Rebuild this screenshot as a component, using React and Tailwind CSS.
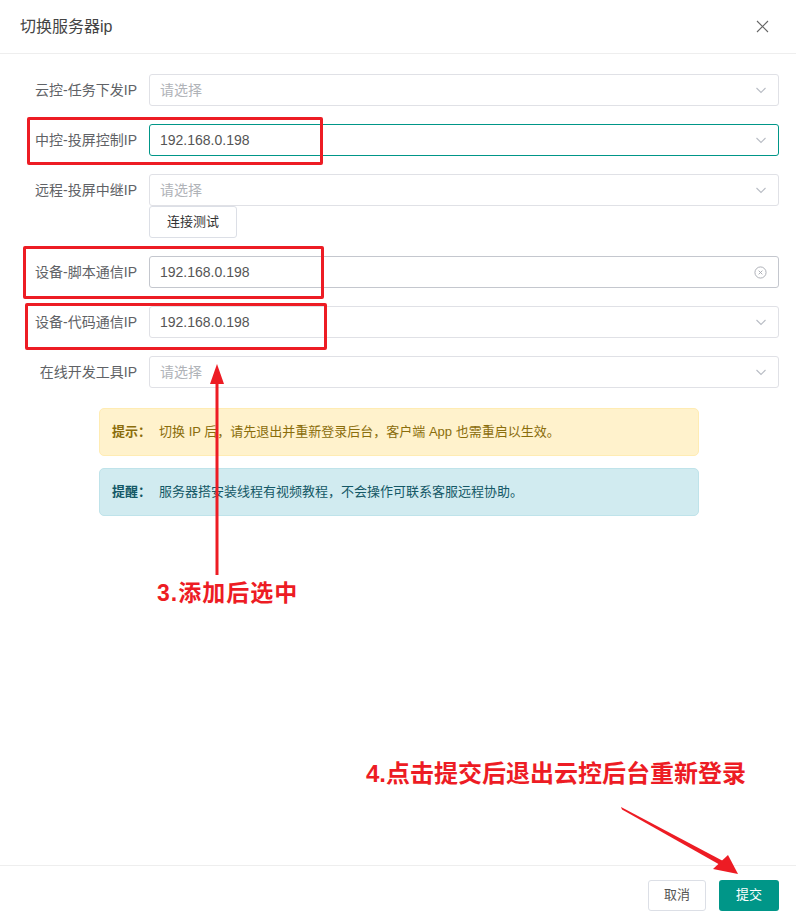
import React from 'react';

const fieldRows = [
  { label: '云控-任务下发IP', value: '', state: 'idle', icon: 'chevron' },
  { label: '中控-投屏控制IP', value: '192.168.0.198', state: 'focus', icon: 'chevron' },
  { label: '远程-投屏中继IP', value: '', state: 'idle', icon: 'chevron', extra: true },
  { label: '设备-脚本通信IP', value: '192.168.0.198', state: 'hover', icon: 'clear' },
  { label: '设备-代码通信IP', value: '192.168.0.198', state: 'idle', icon: 'chevron' },
  { label: '在线开发工具IP', value: '', state: 'idle', icon: 'chevron' },
];

const Chevron = () => (
  <svg width="12" height="12" viewBox="0 0 12 12" fill="none">
    <path d="M1.5 4l4.5 4.5L10.5 4" stroke="#b8bcc4" strokeWidth="1.1" />
  </svg>
);

const ClearIcon = () => (
  <svg width="13" height="13" viewBox="0 0 14 14" fill="none">
    <circle cx="7" cy="7" r="6" stroke="#a8abb2" strokeWidth="1" />
    <path d="M5 5l4 4M9 5l-4 4" stroke="#a8abb2" strokeWidth="1" />
  </svg>
);

const Field = ({ label, value, state, icon }) => {
  const border =
    state === 'focus' ? 'border-[#009688]' : state === 'hover' ? 'border-[#c4c7ce]' : 'border-[#e0e1e6]';
  return (
    <div className="flex items-center h-8">
      <div className="w-[149px] pr-3 text-right text-[14px] text-[#606266] shrink-0">{label}</div>
      <div className={`flex-1 h-8 border rounded-[3px] flex items-center justify-between pl-[10px] pr-[11px] ${border}`}>
        <span className={`text-[14px] ${value ? 'text-[#555]' : 'text-[#b0b3b8]'}`}>{value || '请选择'}</span>
        {icon === 'clear' ? <ClearIcon /> : <Chevron />}
      </div>
    </div>
  );
};

const App = () => {
  return (
    <div
      className="relative w-[796px] h-[924px] bg-white flex flex-col overflow-hidden"
      style={{ fontFamily: '"Liberation Sans", "Noto Sans CJK SC", sans-serif' }}
    >
      {/* Header */}
      <div className="h-[54px] border-b border-[#eeeeee] flex items-center justify-between pl-5 pr-[27px] shrink-0">
        <h1 className="text-[16px] text-[#444] font-normal">切换服务器ip</h1>
        <svg width="13" height="13" viewBox="0 0 13 13" fill="none">
          <path d="M1 1l11 11M12 1L1 12" stroke="#666" strokeWidth="1.1" />
        </svg>
      </div>

      {/* Form */}
      <div className="pt-5 pr-[17px]">
        {fieldRows.map((row) => (
          <div key={row.label} className="mb-[18px]">
            <Field {...row} />
            {row.extra && (
              <div className="pl-[149px]">
                <button className="h-8 w-[88px] border border-[#dcdfe6] rounded-[3px] text-[13px] text-[#333] bg-white">
                  连接测试
                </button>
              </div>
            )}
          </div>
        ))}
      </div>

      {/* Alerts */}
      <div className="ml-[99px] w-[600px] mt-[2px] flex flex-col gap-3">
        <div className="h-12 rounded-[5px] bg-[#fff2cc] border border-[#ffecb3] flex items-center px-3 text-[13px] text-[#8a6d0b]">
          <span className="font-bold mr-[8px]">提示：</span>
          <span>切换 IP 后，请先退出并重新登录后台，客户端 App 也需重启以生效。</span>
        </div>
        <div className="h-12 rounded-[5px] bg-[#d1ebf0] border border-[#bfe3ea] flex items-center px-3 text-[13px] text-[#145866]">
          <span className="font-bold mr-[8px]">提醒：</span>
          <span>服务器搭安装线程有视频教程，不会操作可联系客服远程协助。</span>
        </div>
      </div>

      {/* Footer */}
      <div className="mt-auto h-[59px] border-t border-[#eeeeee] flex items-center justify-end gap-[13px] pr-[17px] shrink-0">
        <button className="h-[31px] w-[58px] border border-[#dcdfe6] rounded-[3px] text-[13px] text-[#555] bg-white">
          取消
        </button>
        <button className="h-[31px] w-[60px] rounded-[3px] text-[13px] text-white bg-[#009688]">提交</button>
      </div>

      {/* Annotations */}
      <div className="absolute left-[27px] top-[117px] w-[296px] h-[48px] border-[3px] border-[#ed1c24] rounded-[2px]" />
      <div className="absolute left-[23px] top-[246px] w-[301px] h-[53px] border-[3px] border-[#ed1c24] rounded-[2px]" />
      <div className="absolute left-[25px] top-[303px] w-[302px] h-[47px] border-[3px] border-[#ed1c24] rounded-[2px]" />

      <svg className="absolute left-0 top-0 pointer-events-none" width="796" height="924">
        <line x1="217" y1="380" x2="217" y2="575" stroke="#ed1c24" strokeWidth="3" />
        <polygon points="217,364 210,384 224,384" fill="#ed1c24" />
        <polygon points="621,807 622,809.5 722,866 724,861.5" fill="#ed1c24" />
        <polygon points="738,874 713,869 728,855" fill="#ed1c24" />
      </svg>

      <div className="absolute left-[157px] top-[582px] text-[23px] font-bold text-[#ed1c24] leading-none tracking-[1px]">
        3.添加后选中
      </div>
      <div className="absolute left-[366px] top-[762px] text-[24px] font-bold text-[#ed1c24] leading-none">
        4.点击提交后退出云控后台重新登录
      </div>
    </div>
  );
};

export default App;
